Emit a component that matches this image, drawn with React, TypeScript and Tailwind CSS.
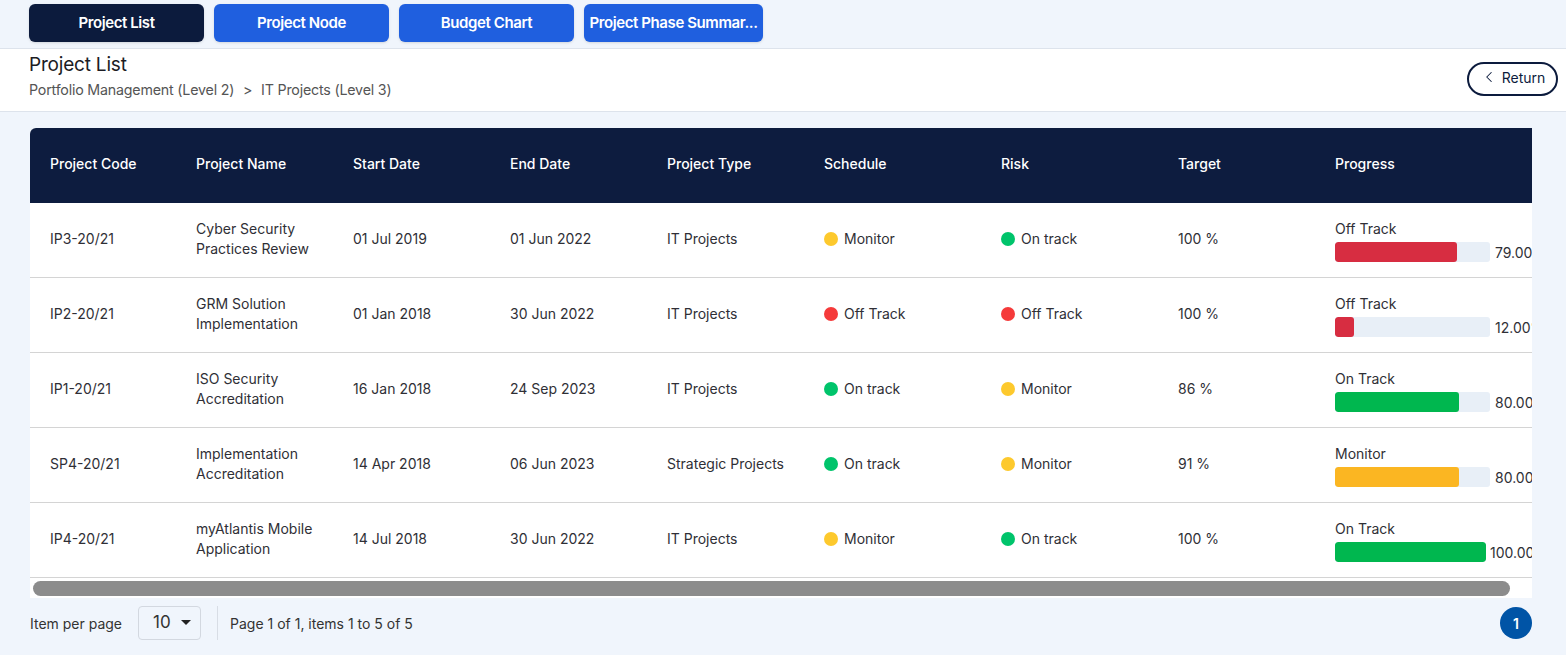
import { ChevronLeft } from "lucide-react"

type Status = "Monitor" | "On track" | "Off Track"

interface Row {
  code: string
  name: string[]
  start: string
  end: string
  type: string
  schedule: Status
  risk: Status
  target: string
  progressLabel: string
  progress: number
  color: string
}

const rows: Row[] = [
  {
    code: "IP3-20/21",
    name: ["Cyber Security", "Practices Review"],
    start: "01 Jul 2019",
    end: "01 Jun 2022",
    type: "IT Projects",
    schedule: "Monitor",
    risk: "On track",
    target: "100 %",
    progressLabel: "Off Track",
    progress: 79,
    color: "bg-[#d72d41]",
  },
  {
    code: "IP2-20/21",
    name: ["GRM Solution", "Implementation"],
    start: "01 Jan 2018",
    end: "30 Jun 2022",
    type: "IT Projects",
    schedule: "Off Track",
    risk: "Off Track",
    target: "100 %",
    progressLabel: "Off Track",
    progress: 12,
    color: "bg-[#d72d41]",
  },
  {
    code: "IP1-20/21",
    name: ["ISO Security", "Accreditation"],
    start: "16 Jan 2018",
    end: "24 Sep 2023",
    type: "IT Projects",
    schedule: "On track",
    risk: "Monitor",
    target: "86 %",
    progressLabel: "On Track",
    progress: 80,
    color: "bg-[#00b74f]",
  },
  {
    code: "SP4-20/21",
    name: ["Implementation", "Accreditation"],
    start: "14 Apr 2018",
    end: "06 Jun 2023",
    type: "Strategic Projects",
    schedule: "On track",
    risk: "Monitor",
    target: "91 %",
    progressLabel: "Monitor",
    progress: 80,
    color: "bg-[#fbb622]",
  },
  {
    code: "IP4-20/21",
    name: ["myAtlantis Mobile", "Application"],
    start: "14 Jul 2018",
    end: "30 Jun 2022",
    type: "IT Projects",
    schedule: "Monitor",
    risk: "On track",
    target: "100 %",
    progressLabel: "On Track",
    progress: 100,
    color: "bg-[#00b74f]",
  },
]

const dotColor: Record<Status, string> = {
  Monitor: "bg-[#fdc92d]",
  "On track": "bg-[#00c46b]",
  "Off Track": "bg-[#f53a3a]",
}

const tabs = ["Project List", "Project Node", "Budget Chart", "Project Phase Summar..."]

const columns = [
  { label: "Project Code", w: "w-[146px]" },
  { label: "Project Name", w: "w-[157px]" },
  { label: "Start Date", w: "w-[157px]" },
  { label: "End Date", w: "w-[157px]" },
  { label: "Project Type", w: "w-[157px]" },
  { label: "Schedule", w: "w-[177px]" },
  { label: "Risk", w: "w-[177px]" },
  { label: "Target", w: "w-[157px]" },
  { label: "Progress", w: "w-[243px]" },
]

function StatusDot({ status }: { status: Status }) {
  return (
    <span className="flex items-center gap-[6px]">
      <span className={`w-[14px] h-[14px] rounded-full ${dotColor[status]}`} />
      {status}
    </span>
  )
}

export default function App() {
  return (
    <div
      className="w-[1566px] h-[655px] overflow-hidden bg-[#f0f5fc] text-[#2f2f36]"
      style={{ fontFamily: "Inter, 'Noto Sans', sans-serif" }}
    >
      <div className="h-[49px] flex items-start gap-[10px] pl-[29px] pt-[4px] border-b border-[#dde3ec]">
        {tabs.map((t, i) => (
          <div
            key={t}
            className={`h-[38px] flex items-center justify-center rounded-[6px] text-white text-[15px] font-semibold tracking-[-0.4px] shadow-sm ${
              i === 0 ? "bg-[#0c1b3d]" : "bg-[#1f5fdf]"
            } ${i === 3 ? "w-[179px]" : "w-[175px]"}`}
          >
            {t}
          </div>
        ))}
      </div>

      <div className="h-[63px] bg-white border-b border-[#dde3ec] flex items-start justify-between pl-[29px] pr-[8px]">
        <div className="pt-[2px]">
          <div className="text-[19px] leading-[28px] text-[#1c1c24] tracking-[-0.2px]">Project List</div>
          <div className="text-[14.25px] leading-[20px] text-[#555] mt-[1px] tracking-[-0.2px]">
            Portfolio Management (Level 2) <span className="mx-[5px]">&gt;</span> IT Projects (Level 3)
          </div>
        </div>
        <button className="mt-[13px] h-[34px] w-[91px] rounded-full border-2 border-[#0c1b3d] flex items-center justify-center gap-[4px] pb-[4px] text-[14px] text-[#0c1b3d]">
          <ChevronLeft className="w-[18px] h-[18px]" strokeWidth={1.4} />
          Return
        </button>
      </div>

      <div className="ml-[30px] mt-[16px] w-[1502px] bg-white rounded-tl-[6px] overflow-hidden">
        <div className="w-[1528px]">
          <div className="h-[75px] pb-[4px] bg-[#0d1c3f] flex items-center text-white text-[14px] font-medium">
            {columns.map((c) => (
              <div key={c.label} className={`${c.w} pl-[20px] shrink-0`}>
                {c.label}
              </div>
            ))}
          </div>
          {rows.map((r) => (
            <div key={r.code} className="h-[75px] pb-[3px] flex items-center text-[14px] border-b border-[#d4d4d4]">
              <div className="w-[146px] pl-[20px] shrink-0">{r.code}</div>
              <div className="w-[157px] pl-[20px] shrink-0 leading-[20px]">
                <div>{r.name[0]}</div>
                <div>{r.name[1]}</div>
              </div>
              <div className="w-[157px] pl-[20px] shrink-0">{r.start}</div>
              <div className="w-[157px] pl-[20px] shrink-0">{r.end}</div>
              <div className="w-[157px] pl-[20px] shrink-0">{r.type}</div>
              <div className="w-[177px] pl-[20px] shrink-0">
                <StatusDot status={r.schedule} />
              </div>
              <div className="w-[177px] pl-[20px] shrink-0">
                <StatusDot status={r.risk} />
              </div>
              <div className="w-[157px] pl-[20px] shrink-0">{r.target}</div>
              <div className="w-[243px] pl-[20px] shrink-0 mt-[4px]">
                <div className="leading-[20px]">{r.progressLabel}</div>
                <div className="flex items-center gap-[5px] mt-[3px]">
                  <div
                    className={`h-[20px] rounded-[3px] bg-[#e8eff7] overflow-hidden ${
                      r.progress === 100 ? "w-[151px]" : "w-[155px]"
                    }`}
                  >
                    <div className={`h-full rounded-[3px] ${r.color}`} style={{ width: `${r.progress}%` }} />
                  </div>
                  <span className={r.progress === 100 ? "-ml-[1px]" : ""}>{r.progress.toFixed(2)}%</span>
                </div>
              </div>
            </div>
          ))}
        </div>
        <div className="h-[20px] pt-[3px] pl-[3px]">
          <div className="w-[1477px] h-[15px] rounded-full bg-[#8c8c8c]" />
        </div>
      </div>

      <div className="h-[50px] flex items-center pl-[30px] pr-[34px] text-[14px] text-[#333]">
        <span>Item per page</span>
        <div className="ml-[16px] w-[63px] h-[34px] border border-[#d3d8e0] rounded-[4px] flex items-center justify-between pl-[14px] pr-[9px] text-[17px]">
          10
          <svg width="10" height="6" viewBox="0 0 10 6">
            <path d="M0 0 L10 0 L5 5 Z" fill="#222" />
          </svg>
        </div>
        <div className="ml-[16px] mr-[12px] w-px h-[34px] bg-[#d8dde5]" />
        <span>Page 1 of 1, items 1 to 5 of 5</span>
        <div className="ml-auto w-[32px] h-[32px] rounded-full bg-[#0054a6] text-white text-[14px] font-semibold flex items-center justify-center">
          1
        </div>
      </div>
    </div>
  )
}
